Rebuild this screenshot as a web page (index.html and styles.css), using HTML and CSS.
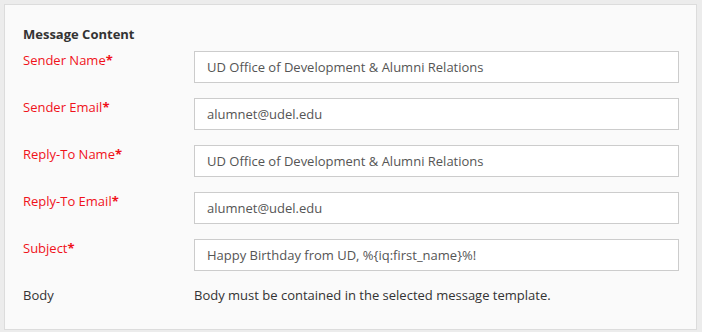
FILE: index.html
```html
<!DOCTYPE html>
<html lang="en">
<head>
  <meta charset="UTF-8" />
  <title>Message Content</title>
  <link rel="stylesheet" href="styles.css">
</head>
<body>
  <div class="panel">
    <h3>Message Content</h3>
    <div class="row">
      <label class="required" for="sender-name">Sender Name<b>*</b></label>
      <input type="text" id="sender-name" value="UD Office of Development &amp; Alumni Relations" />
    </div>
    <div class="row">
      <label class="required" for="sender-email">Sender Email<b>*</b></label>
      <input type="text" id="sender-email" value="alumnet@udel.edu" />
    </div>
    <div class="row">
      <label class="required" for="reply-name">Reply-To Name<b>*</b></label>
      <input type="text" id="reply-name" value="UD Office of Development &amp; Alumni Relations" />
    </div>
    <div class="row">
      <label class="required" for="reply-email">Reply-To Email<b>*</b></label>
      <input type="text" id="reply-email" value="alumnet@udel.edu" />
    </div>
    <div class="row">
      <label class="required" for="subject">Subject<b>*</b></label>
      <input type="text" id="subject" value="Happy Birthday from UD, %{iq:first_name}%!" />
    </div>
    <div class="row static">
      <label>Body</label>
      <p>Body must be contained in the selected message template.</p>
    </div>
  </div>
</body>
</html>
```

FILE: styles.css
```css
body {
  margin: 0;
  padding: 4px 5px 3px 4px;
  background: #ececec;
  font-family: 'Open Sans', sans-serif;
  font-size: 13px;
  color: #333;
}

.panel {
  background: #fafafa;
  border: 1px solid #dcdcdc;
  padding: 20px 17px 22px 18px;
  height: 282px;
}

.panel h3 {
  margin: 0 0 8px;
  font-size: 13px;
  font-weight: 700;
  line-height: 18px;
  color: #333;
}

.row {
  display: flex;
  align-items: flex-start;
  margin-bottom: 15px;
}

.row label {
  width: 171px;
  flex-shrink: 0;
  line-height: 18px;
}

.required {
  color: #f0121a;
}

.required b {
  font-weight: 700;
}

.row input {
  flex: 1;
  height: 32px;
  box-sizing: border-box;
  border: 1px solid #cccccc;
  background: #fff;
  padding: 0 12px;
  font-family: 'Open Sans', sans-serif;
  font-size: 13px;
  color: #555;
  margin: 0;
}

.row.static {
  margin-top: 15px;
}

.row.static p {
  margin: 0;
  line-height: 18px;
}
```
